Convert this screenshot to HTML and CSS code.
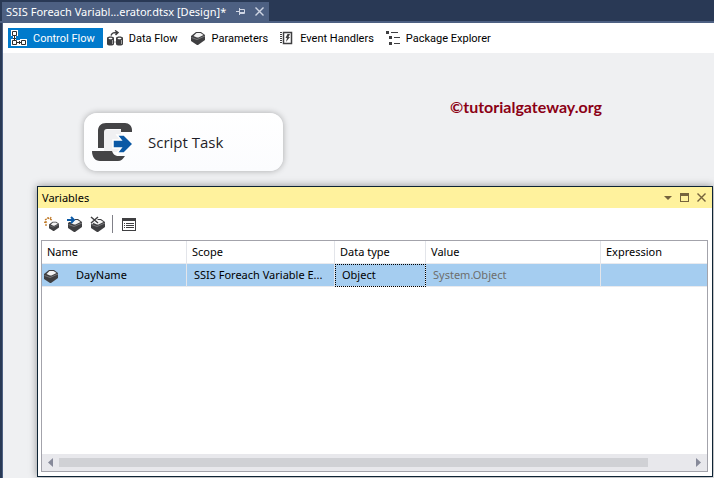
FILE: index.html
```
<!DOCTYPE html>
<html lang="en">
<head>
  <meta charset="UTF-8">
  <title>SSIS Foreach Variable Enumerator.dtsx [Design]</title>
  <link rel="stylesheet" href="styles.css">
</head>
<body>
  <svg class="defs" aria-hidden="true">
    <symbol id="box" viewBox="0 0 16 14">
      <path fill="#3f3f41" d="M6 1h5l4 3v5l-7 5H7l-6-4V5z"/>
      <path fill="#f4f4f4" d="M6.500 2h4l3 2-5 2.500H7L3.500 5z"/>
      <path fill="none" stroke="#77777a" d="M1.500 6.500L7 8.500l8-3.500"/>
    </symbol>
  </svg>

  <header class="doc-tabs">
    <div class="doc-tab">
      <span class="doc-name">SSIS Foreach Variabl...erator.dtsx [Design]*</span>
      <button class="doc-btn pin" aria-label="Pin">
        <svg width="9" height="9" viewBox="0 0 9 9"><path fill="none" stroke="#d0d6e4" d="M0 4.500h3M3.500 1v7M4 2.500h4.500v4H4M4 5.500h4"/></svg>
      </button>
      <button class="doc-btn" aria-label="Close document">
        <svg width="9" height="9" viewBox="0 0 9 9"><path fill="none" stroke="#d0d6e4" stroke-width="1.400" d="M.5.5l8 8M8.500.5l-8 8"/></svg>
      </button>
    </div>
  </header>

  <div class="designer">
    <nav class="views">
      <button class="view active">
        <svg width="16" height="16" viewBox="0 0 16 16"><path fill="#fff" d="M0 0h7v6H5v4h4V9h7v7H0V9h2V6H0z"/><path fill="none" stroke="#303030" d="M1.500 1.500h4v4h-4zM1.500 10.500h4v4h-4zM10.500 10.500h4v4h-4zM3.500 6v4M2 8.500h3M6 12.500h4M8.500 11v3"/></svg>
        Control Flow
      </button>
      <button class="view">
        <svg width="16" height="16" viewBox="0 0 16 16"><path fill="#3f3f41" d="M0 8c0-2 7-2 7 0v6c0 2-7 2-7 0zM9 8c0-2 7-2 7 0v6c0 2-7 2-7 0z"/><path fill="#fff" d="M1.500 8.500c0-1 4-1 4 0s-4 1-4 0zM10.500 8.500c0-1 4-1 4 0s-4 1-4 0z"/><path stroke="#a0a0a0" d="M5.500 10v4M14.500 10v4M7 12h2"/><path fill="none" stroke="#3f3f41" stroke-width="1.500" d="M4 5.500c1-3 3-3 6-3M8 .5l3 2-2.500 2.500"/></svg>
        Data Flow
      </button>
      <button class="view">
        <svg width="16" height="14"><use href="#box"/></svg>
        Parameters
      </button>
      <button class="view">
        <svg width="14" height="14" viewBox="0 0 14 14"><path fill="none" stroke="#3f3f41" stroke-width="1.500" d="M3.500 1.500h8v11h-8z"/><path stroke="#3f3f41" stroke-width="2" stroke-dasharray="1 1" d="M1 1v12"/><path fill="#3f3f41" d="M7.500 3h2.500L8.500 6H10l-4 5 1-4H5.500z"/></svg>
        Event Handlers
      </button>
      <button class="view">
        <svg width="14" height="14" viewBox="0 0 14 14"><path fill="#3f3f41" d="M0 0h3v3H0zM3 5h3v3H3zM3 11h3v3H3z"/><path stroke="#3f3f41" d="M5 1.500h7M8 6.500h6M8 12.500h6"/></svg>
        Package Explorer
      </button>
    </nav>

    <main class="canvas">
      <div class="canvas-top">
        <div class="task">
          <svg width="40" height="40" viewBox="0 0 40 40">
            <path fill="#f0f0f2" d="M12 8h17v22H12z"/>
            <path fill="#444446" d="M6 26V9c0-5 3-8 8-8h19c4 0 7 3 7 7v2H29V7H15c-2 0-3 1-3 3v16z"/>
            <path fill="#444446" d="M0 29h20c1 3 3 5 7 5h6c-2 3-4 5-7 5H8c-5 0-8-4-8-10z"/>
            <path fill="#0b59a5" stroke="#fff" stroke-width="1.500" d="M21 18h8l-4-5h7l9 9-9 9h-7l4-5h-8z"/>
          </svg>
          Script Task
        </div>
        <span class="credit">©tutorialgateway.org</span>
      </div>

      <section class="panel">
        <div class="panel-title">
          <h2>Variables</h2>
          <button aria-label="Window position"><svg width="8" height="4" viewBox="0 0 8 4"><path fill="#75633d" d="M0 0h8L4 4z"/></svg></button>
          <button aria-label="Maximize"><svg width="9" height="9" viewBox="0 0 9 9"><path fill="#75633d" d="M0 0h9v9H0zM1 3v5h7V3z" fill-rule="evenodd"/></svg></button>
          <button aria-label="Close"><svg width="9" height="9" viewBox="0 0 9 9"><path stroke="#75633d" stroke-width="1.400" d="M.5.5l8 8M8.500.5l-8 8"/></svg></button>
        </div>

        <div class="panel-tools">
          <button aria-label="Add variable">
            <svg width="16" height="16" viewBox="0 0 16 16"><path stroke="#c07a28" stroke-dasharray="2 1" stroke-width="1.300" fill="none" d="M1 4l3-2 4 2M2 10V5M0 6l3 1M4 1v3M7 1L6 4"/><svg x="4" y="5" width="12" height="10"><use href="#box"/></svg></svg>
          </button>
          <button aria-label="Move variable">
            <svg width="16" height="16" viewBox="0 0 16 16"><svg x="0" y="2" width="16" height="14"><use href="#box"/></svg><path stroke="#fff" stroke-width="4" d="M1 4h7"/><path fill="none" stroke="#0b59a5" stroke-width="2" d="M0 4h7M4 1l3 3-3 3"/></svg>
          </button>
          <button aria-label="Delete variable">
            <svg width="16" height="16" viewBox="0 0 16 16"><svg x="0" y="2" width="16" height="14"><use href="#box"/></svg><path stroke="#fff" stroke-width="3" d="M1 1l7 6M8 1L1 7"/><path stroke="#3f3f41" stroke-width="1.500" d="M1 1l7 6M8 1L1 7"/></svg>
          </button>
          <span class="divider"></span>
          <button aria-label="Grid options">
            <svg width="14" height="13" viewBox="0 0 14 13"><path fill="#3f3f41" fill-rule="evenodd" d="M0 0h14v13H0zM1 3v9h12V3z"/><path stroke="#3f3f41" d="M2 5.500h1M4 5.500h8M2 7.500h1M4 7.500h8M2 9.500h1M4 9.500h8"/></svg>
          </button>
        </div>

        <div class="grid">
          <table>
            <colgroup>
              <col class="col-name">
              <col class="col-scope">
              <col class="col-type">
              <col class="col-value">
              <col>
            </colgroup>
            <thead>
              <tr><th>Name</th><th>Scope</th><th>Data type</th><th>Value</th><th>Expression</th></tr>
            </thead>
            <tbody>
              <tr>
                <td class="name"><svg width="16" height="14"><use href="#box"/></svg>DayName</td>
                <td>SSIS Foreach Variable E...</td>
                <td class="focused">Object</td>
                <td class="readonly">System.Object</td>
                <td></td>
              </tr>
            </tbody>
          </table>
          <div class="scrollbar">
            <button aria-label="Scroll left"><svg width="5" height="9" viewBox="0 0 5 9"><path fill="#868999" d="M5 0v9L0 4.500z"/></svg></button>
            <div class="track"><div class="thumb"></div></div>
            <button aria-label="Scroll right"><svg width="5" height="9" viewBox="0 0 5 9"><path fill="#868999" d="M0 0v9l5-4.500z"/></svg></button>
          </div>
        </div>
      </section>
    </main>
  </div>
</body>
</html>
```
FILE: styles.css
```
* {
  box-sizing: border-box;
}

body {
  margin: 0;
  height: 100vh;
  display: flex;
  flex-direction: column;
  background: #293955;
  color: #000;
  font-family: "Noto Sans", "Segoe UI", sans-serif;
  font-size: 11px;
}

button {
  padding: 0;
  border: 0;
  background: none;
  font: inherit;
  color: inherit;
}

svg {
  display: block;
  flex: none;
}

.defs {
  position: absolute;
  width: 0;
  height: 0;
}

/* document tabs */
.doc-tabs {
  display: flex;
  height: 23px;
  padding: 2px 0 0 2px;
  border-bottom: 2px solid #4d6082;
}

.doc-tab {
  display: flex;
  align-items: center;
  padding: 0 5px 0 4px;
  background: #4d6082;
  color: #fff;
}

.doc-name {
  white-space: nowrap;
}

.doc-btn {
  margin-left: 10px;
}

/* designer views */
.designer {
  flex: 1;
  display: flex;
  flex-direction: column;
  margin-left: 2px;
  border-left: 1px solid #4d6082;
  background: #eff0f2;
}

.views {
  display: flex;
  align-items: center;
  gap: 2px;
  height: 30px;
  padding: 0 5px;
  background: #fff;
}

.view {
  display: flex;
  align-items: center;
  gap: 6px;
  height: 20px;
  padding: 0 8px 0 2px;
  font-family: Roboto, Tahoma, sans-serif;
  white-space: nowrap;
}

.view.active {
  padding-left: 3px;
  background: #007acc;
  color: #fff;
}

/* design surface */
.canvas {
  flex: 1;
  display: flex;
  flex-direction: column;
  padding: 0 1px 1px 34px;
}

.canvas-top {
  display: flex;
  justify-content: space-between;
  align-items: flex-start;
  height: 133px;
  padding: 44px 111px 0 47px;
}

.task {
  display: flex;
  align-items: center;
  gap: 16px;
  width: 199px;
  height: 58px;
  margin-top: 16px;
  padding: 0 8px;
  border-radius: 13px;
  background: linear-gradient(#fff, #fbfcfe);
  box-shadow: 0 0 6px rgba(0, 0, 0, 0.3);
  color: #1e1e28;
  font-family: "Open Sans", Tahoma, sans-serif;
  font-size: 15px;
}

.credit {
  color: #8b0015;
  font-family: Lato, Calibri, sans-serif;
  font-size: 16px;
  font-weight: bold;
}

/* variables window */
.panel {
  flex: 1;
  display: flex;
  flex-direction: column;
  padding: 0 4px 4px 3px;
  border: 1px solid #0e2435;
  background: #fff;
  box-shadow: 0 0 8px rgba(0, 0, 0, 0.4);
}

.panel-title {
  display: flex;
  align-items: center;
  gap: 8px;
  height: 21px;
  margin: 0 -4px 0 -3px;
  padding: 0 6px 0 4px;
  background: #fff29d;
}

.panel-title h2 {
  flex: 1;
  margin: 0;
  font-size: 11px;
  font-weight: normal;
}

.panel-tools {
  display: flex;
  align-items: center;
  gap: 7px;
  height: 32px;
  padding-left: 3px;
}

.divider {
  width: 1px;
  height: 18px;
  margin: 0 2px 0 -1px;
  background: #808088;
}

.grid {
  flex: 1;
  display: flex;
  flex-direction: column;
  justify-content: space-between;
  border: 1px solid #a3a3ab;
}

table {
  width: 100%;
  border-collapse: separate;
  border-spacing: 0;
  table-layout: fixed;
}

.col-name {
  width: 145px;
}

.col-scope {
  width: 148px;
}

.col-type {
  width: 91px;
}

.col-value {
  width: 175px;
}

th,
td {
  height: 23px;
  padding: 0 0 0 5px;
  border-right: 1px solid #e3e5ea;
  border-bottom: 1px solid #e9eaee;
  font-weight: normal;
  line-height: 16px;
  text-align: left;
  white-space: nowrap;
}

th:last-child,
td:last-child {
  border-right: 0;
}

td {
  padding-left: 7px;
  background: #a5cdf0;
}

td.name {
  padding-left: 1px;
}

.name svg {
  display: inline-block;
  margin-right: 17px;
  vertical-align: middle;
}

.focused {
  outline: 1px dotted #000;
  outline-offset: -1px;
}

.readonly {
  color: #6d6d6d;
}

.scrollbar {
  display: flex;
  align-items: center;
  gap: 6px;
  height: 17px;
  padding: 0 6px;
  background: #e8e8ec;
}

.track {
  flex: 1;
}

.thumb {
  width: calc(100% - 42px);
  height: 9px;
  background: #d0d1d5;
}
```
